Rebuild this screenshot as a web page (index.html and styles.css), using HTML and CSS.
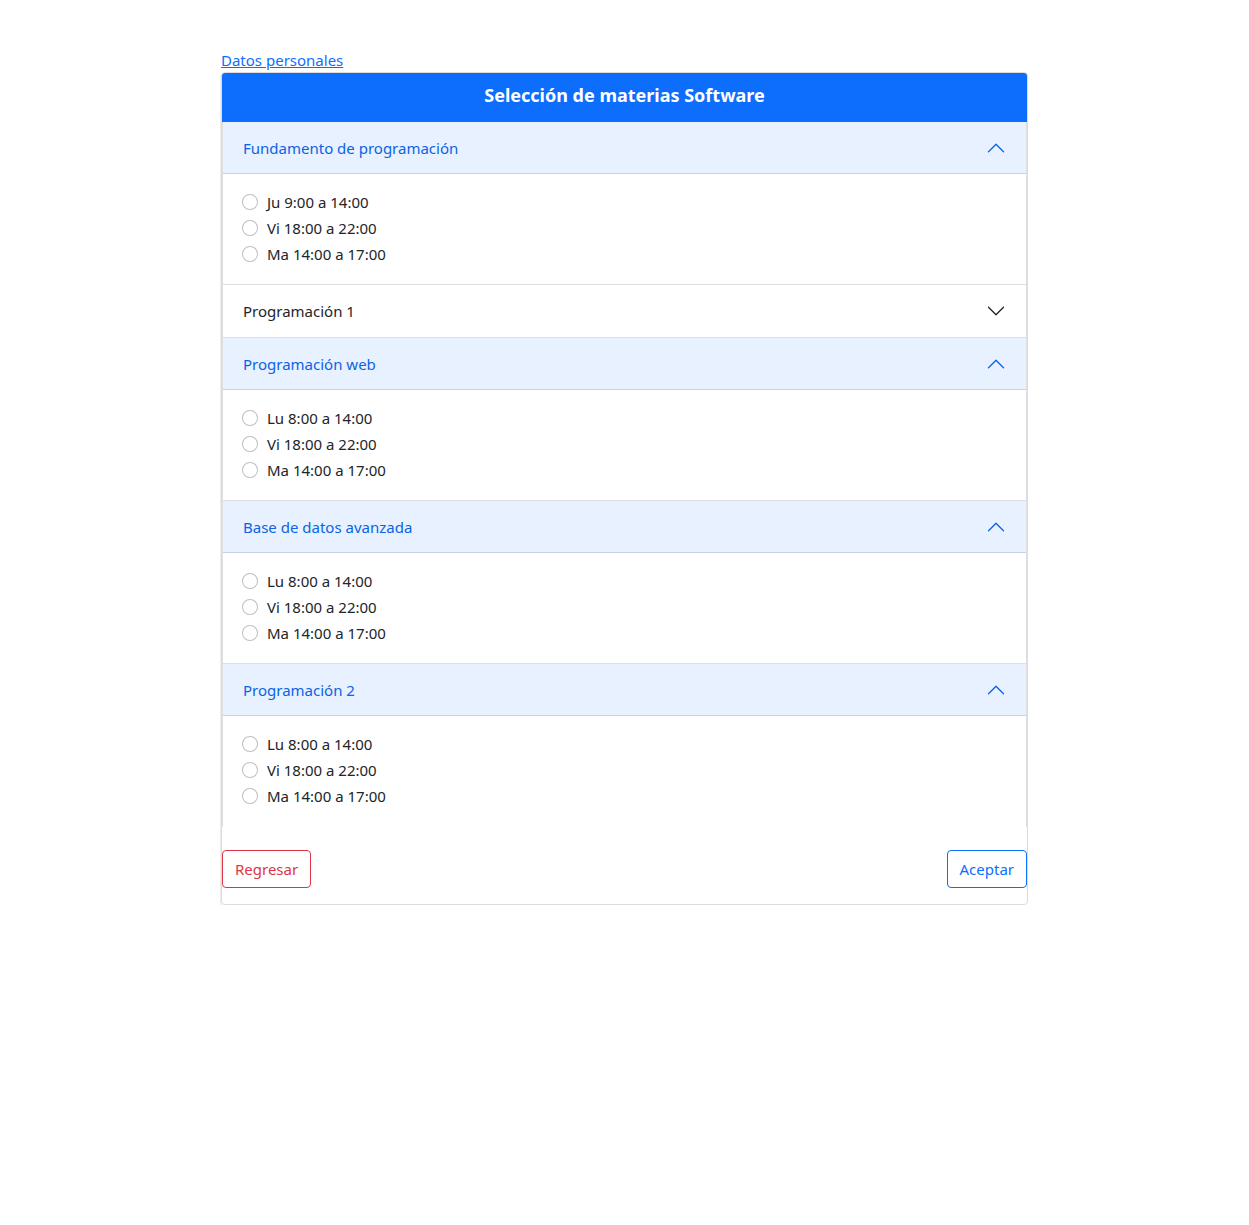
FILE: index.html
```html
<!DOCTYPE html>
<html lang="es">
<head>
<meta charset="utf-8">
<title>Selección de materias</title>
<link rel="stylesheet" href="styles.css">
</head>
<body>
<div class="page">
  <div class="wrap">
    <a class="top-link" href="#">Datos personales</a>
    <div class="card">
      <div class="card-header">Selección de materias Software</div>
      <div class="accordion">
        <div class="acc-item">
          <div class="acc-button open">
            <span>Fundamento de programación</span>
            <svg class="chev" viewBox="0 0 16 16"><path d="M1.646 4.646a.5.5 0 0 1 .708 0L8 10.293l5.646-5.647a.5.5 0 0 1 .708.708l-6 6a.5.5 0 0 1-.708 0l-6-6a.5.5 0 0 1 0-.708z"/></svg>
          </div>
          <div class="acc-body">
            <label class="check"><input type="radio" name="m1"><span>Ju 9:00 a 14:00</span></label>
            <label class="check"><input type="radio" name="m1"><span>Vi 18:00 a 22:00</span></label>
            <label class="check"><input type="radio" name="m1"><span>Ma 14:00 a 17:00</span></label>
          </div>
        </div>
        <div class="acc-item">
          <div class="acc-button">
            <span>Programación 1</span>
            <svg class="chev" viewBox="0 0 16 16"><path d="M1.646 4.646a.5.5 0 0 1 .708 0L8 10.293l5.646-5.647a.5.5 0 0 1 .708.708l-6 6a.5.5 0 0 1-.708 0l-6-6a.5.5 0 0 1 0-.708z"/></svg>
          </div>
        </div>
        <div class="acc-item">
          <div class="acc-button open">
            <span>Programación web</span>
            <svg class="chev" viewBox="0 0 16 16"><path d="M1.646 4.646a.5.5 0 0 1 .708 0L8 10.293l5.646-5.647a.5.5 0 0 1 .708.708l-6 6a.5.5 0 0 1-.708 0l-6-6a.5.5 0 0 1 0-.708z"/></svg>
          </div>
          <div class="acc-body">
            <label class="check"><input type="radio" name="m3"><span>Lu 8:00 a 14:00</span></label>
            <label class="check"><input type="radio" name="m3"><span>Vi 18:00 a 22:00</span></label>
            <label class="check"><input type="radio" name="m3"><span>Ma 14:00 a 17:00</span></label>
          </div>
        </div>
        <div class="acc-item">
          <div class="acc-button open">
            <span>Base de datos avanzada</span>
            <svg class="chev" viewBox="0 0 16 16"><path d="M1.646 4.646a.5.5 0 0 1 .708 0L8 10.293l5.646-5.647a.5.5 0 0 1 .708.708l-6 6a.5.5 0 0 1-.708 0l-6-6a.5.5 0 0 1 0-.708z"/></svg>
          </div>
          <div class="acc-body">
            <label class="check"><input type="radio" name="m4"><span>Lu 8:00 a 14:00</span></label>
            <label class="check"><input type="radio" name="m4"><span>Vi 18:00 a 22:00</span></label>
            <label class="check"><input type="radio" name="m4"><span>Ma 14:00 a 17:00</span></label>
          </div>
        </div>
        <div class="acc-item">
          <div class="acc-button open">
            <span>Programación 2</span>
            <svg class="chev" viewBox="0 0 16 16"><path d="M1.646 4.646a.5.5 0 0 1 .708 0L8 10.293l5.646-5.647a.5.5 0 0 1 .708.708l-6 6a.5.5 0 0 1-.708 0l-6-6a.5.5 0 0 1 0-.708z"/></svg>
          </div>
          <div class="acc-body">
            <label class="check"><input type="radio" name="m5"><span>Lu 8:00 a 14:00</span></label>
            <label class="check"><input type="radio" name="m5"><span>Vi 18:00 a 22:00</span></label>
            <label class="check"><input type="radio" name="m5"><span>Ma 14:00 a 17:00</span></label>
          </div>
        </div>
      </div>
      <div class="actions">
        <button class="btn btn-danger" type="button">Regresar</button>
        <button class="btn btn-primary" type="button">Aceptar</button>
      </div>
    </div>
  </div>
</div>
</body>
</html>
```

FILE: styles.css
```css
* { box-sizing: border-box; }
body {
  margin: 0;
  font-family: "Noto Sans", "Open Sans", "Liberation Sans", sans-serif;
  font-size: 15px;
  line-height: 24px;
  color: #212529;
  background: #fff;
}
.page { padding-top: 48px; }
.wrap { width: 807px; margin: 0 auto; }
.top-link {
  display: inline-block;
  color: #0d6efd;
  text-decoration: underline;
  line-height: 24px;
}
.card {
  border: 1px solid #dcdcdc;
  border-radius: 4px;
  box-shadow: -1px 1px 0 rgba(0,0,0,.07);
  overflow: hidden;
}
.card-header {
  background: #0d6efd;
  color: #fff;
  text-align: center;
  font-weight: 700;
  font-size: 18px;
  line-height: 24px;
  padding: 10px 16px 15px;
}
.acc-item {
  border: 1px solid rgba(0,0,0,.125);
  border-top: 0;
}
.acc-item:last-child { border-bottom: 0; padding-bottom: 1px; }
.acc-button {
  display: flex;
  align-items: center;
  justify-content: space-between;
  height: 52px;
  padding: 16px 20px;
  line-height: 20px;
  color: #212529;
  background: #fff;
}
.acc-button.open {
  color: #0c63e4;
  background: #e7f1ff;
  box-shadow: inset 0 -1px 0 rgba(0,0,0,.125);
}
.chev { width: 20px; height: 20px; fill: #212529; flex-shrink: 0; }
.acc-button.open .chev { fill: #0c63e4; transform: rotate(180deg); }
.acc-body { padding: 16px 20px; }
.check {
  display: flex;
  align-items: center;
  min-height: 24px;
  margin-bottom: 2px;
  line-height: 24px;
}
.check input {
  appearance: none;
  -webkit-appearance: none;
  width: 16px;
  height: 16px;
  margin: 0 9px 0 -1px;
  border: 1px solid rgba(0,0,0,.25);
  border-radius: 50%;
  background: #fff;
}
.actions {
  display: flex;
  justify-content: space-between;
  padding: 23px 0 16px;
}
.btn {
  font-family: inherit;
  font-size: 15px;
  line-height: 24px;
  padding: 6px 12px;
  background: transparent;
  border: 1px solid;
  border-radius: 4px;
}
.btn-danger { color: #dc3545; border-color: #dc3545; }
.btn-primary { color: #0d6efd; border-color: #0d6efd; }
```
